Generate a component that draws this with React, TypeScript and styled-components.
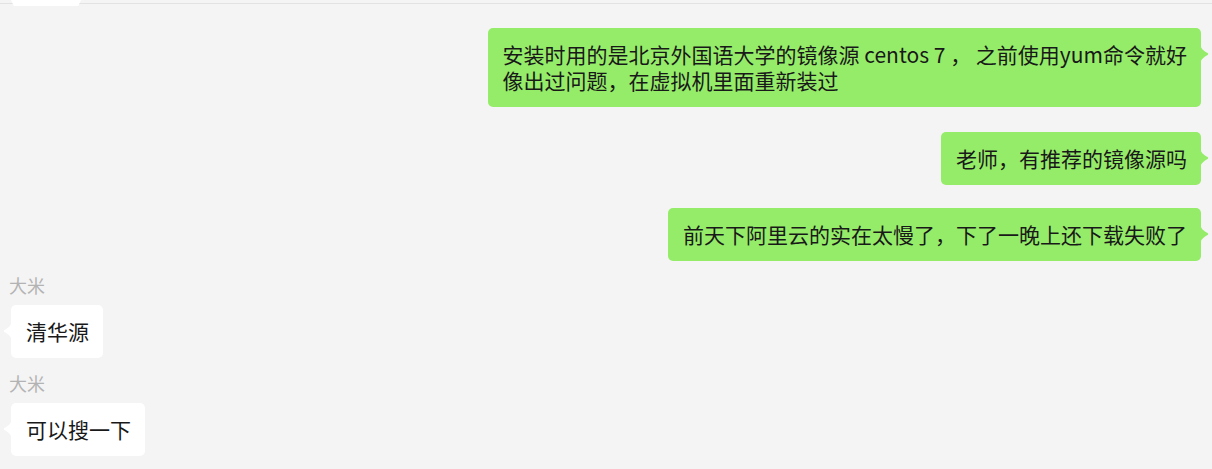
import styled, { createGlobalStyle } from "styled-components";

const GlobalStyle = createGlobalStyle`
  html, body {
    margin: 0;
    padding: 0;
    background: #f4f4f4;
  }
  body {
    font-family: "Noto Sans CJK SC", "Noto Sans", sans-serif;
    color: #191919;
  }
`;

const Page = styled.div`
  position: relative;
  width: 1212px;
  height: 469px;
  overflow: hidden;
  background: #f4f4f4;
`;

const TopRule = styled.div`
  height: 3px;
  border-bottom: 1px solid #e2e2e2;
`;

const Tab = styled.div`
  position: absolute;
  left: 11px;
  top: 0;
  width: 70px;
  height: 6px;
  background: #ffffff;
  clip-path: polygon(0 0, 100% 0, 96% 100%, 4% 100%);
`;

const MessageList = styled.div`
  display: flex;
  flex-direction: column;
  padding: 0 11px;
`;

const Row = styled.div<{ $out?: boolean; $space: number }>`
  display: flex;
  flex-direction: column;
  align-items: ${({ $out }) => ($out ? "flex-end" : "flex-start")};
  margin-top: ${({ $space }) => $space}px;
`;

const Name = styled.div`
  font-size: 18px;
  line-height: 22px;
  color: #b3b3b3;
  margin: 0 0 9px -2px;
`;

const Bubble = styled.div<{ $out?: boolean }>`
  position: relative;
  padding: 13px 14px 14px 15px;
  font-size: 21px;
  line-height: 26px;
  border-radius: 5px;
  background: ${({ $out }) => ($out ? "#95ec69" : "#ffffff")};
  white-space: nowrap;
`;

const Line = styled.div`
  height: 26px;
`;

const Arrow = styled.svg<{ $out?: boolean }>`
  position: absolute;
  top: 16px;
  width: 9px;
  height: 20px;
  ${({ $out }) => ($out ? "right: -8px;" : "left: -8px; transform: scaleX(-1);")}
  fill: ${({ $out }) => ($out ? "#95ec69" : "#ffffff")};
`;

const Tail = ({ out }: { out?: boolean }) => (
  <Arrow $out={out} viewBox="0 0 9 20">
    <path d="M0 0 C1 5 4 7 7.6 9 C8.4 9.5 8.4 10.5 7.6 11 C4 13 1 15 0 20 Z" />
  </Arrow>
);

type Msg = { out?: boolean; name?: string; lines: string[]; space: number };

const messages: Msg[] = [
  {
    out: true,
    space: 24,
    lines: [
      "安装时用的是北京外国语大学的镜像源 centos 7 ， 之前使用yum命令就好",
      "像出过问题，在虚拟机里面重新装过",
    ],
  },
  { out: true, space: 25, lines: ["老师，有推荐的镜像源吗"] },
  { out: true, space: 23, lines: ["前天下阿里云的实在太慢了，下了一晚上还下载失败了"] },
  { name: "大米", space: 13, lines: ["清华源"] },
  { name: "大米", space: 14, lines: ["可以搜一下"] },
];

export default function App() {
  return (
    <Page>
      <GlobalStyle />
      <TopRule />
      <Tab />
      <MessageList>
        {messages.map((m, i) => (
          <Row key={i} $out={m.out} $space={m.space}>
            {m.name && <Name>{m.name}</Name>}
            <Bubble $out={m.out}>
              {m.lines.map((l, j) => (
                <Line key={j}>{l}</Line>
              ))}
              <Tail out={m.out} />
            </Bubble>
          </Row>
        ))}
      </MessageList>
    </Page>
  );
}
